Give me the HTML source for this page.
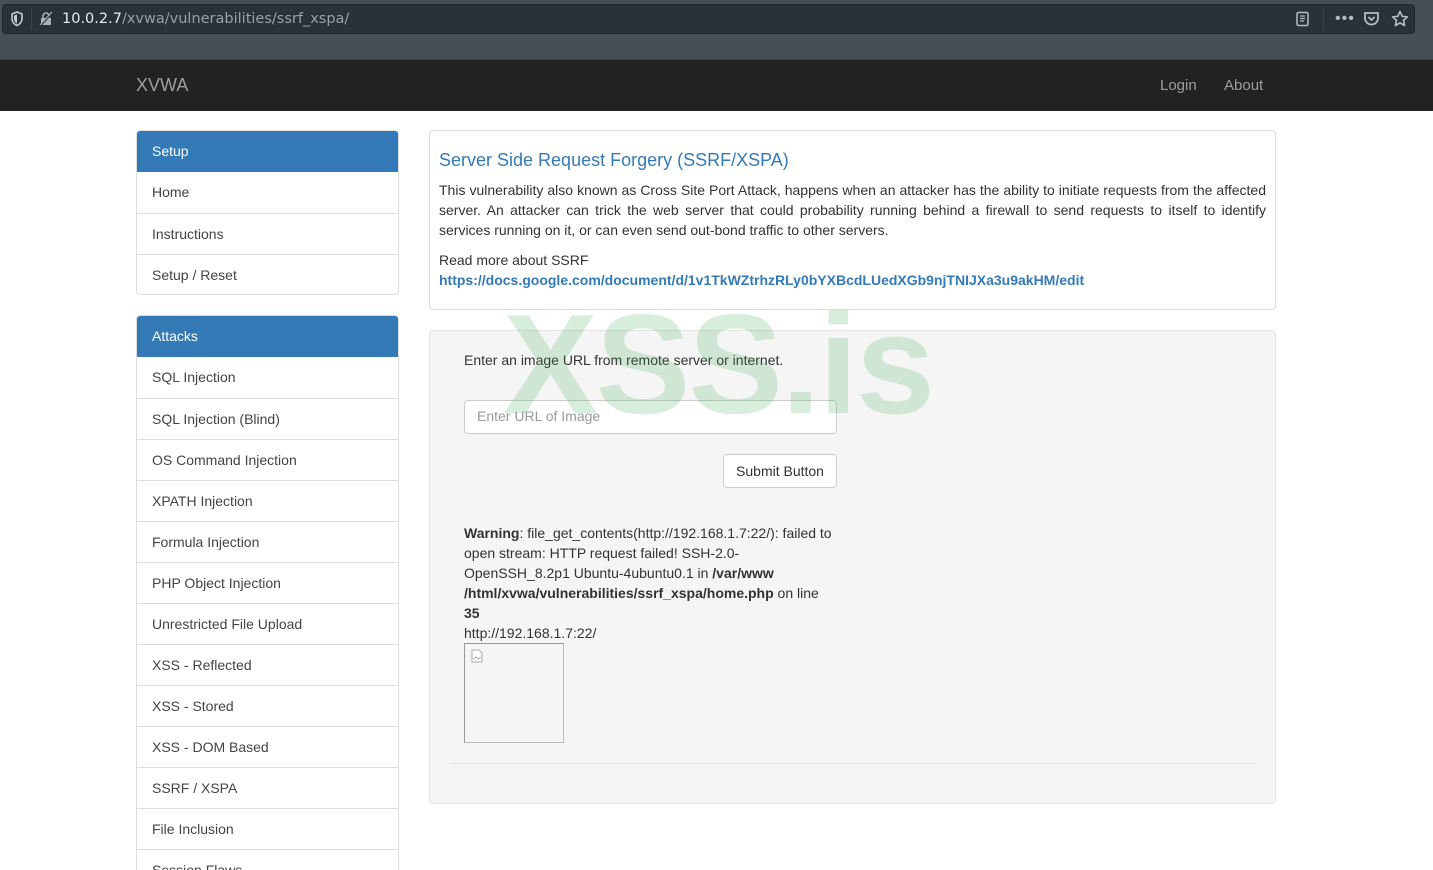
<!DOCTYPE html>
<html style="width:1433px;height:870px;overflow:hidden"><head><meta charset="utf-8"><style>
*{box-sizing:border-box;margin:0;padding:0}
body{width:1433px;height:870px;overflow:hidden;font-family:"Liberation Sans",sans-serif;font-size:14px;color:#333;background:#fff;position:relative}
.abs{position:absolute}
#chrome{left:0;top:0;width:1433px;height:59px;background:#474f56}
#url{left:2px;top:4px;width:1413px;height:30px;background:#2a3239;border-radius:4px;border:1px solid #1f262c}
#nav{left:0;top:59px;width:1433px;height:52px;background:#222;border-top:1px solid #3a3f44}
.navt{color:#9d9d9d;font-size:15px}
.side{left:136px;width:263px;border:1px solid #ddd;border-radius:4px;overflow:hidden;background:#fff}
.side div{position:absolute;left:0;width:261px;height:41px;line-height:40px;padding-left:15px;border-top:1px solid #ddd;font-size:14px;color:#444}
.side div.h{background:#337ab7;color:#fff;border-top:none;height:41px;line-height:41px;top:0}
#p1{left:429px;top:130px;width:847px;height:180px;border:1px solid #ddd;border-radius:4px;padding:0 9px}
#p2{left:429px;top:330px;width:847px;height:474px;border:1px solid #e3e3e3;border-radius:4px;background:#f5f5f5}
a{color:#337ab7;text-decoration:none}
</style></head><body>
<div id="chrome" class="abs"></div>
<div id="url" class="abs"></div>
<svg class="abs" style="left:10px;top:11px" width="14" height="16" viewBox="0 0 14 16"><path d="M7 1L2 3v4c0 4 2.5 6.5 5 7.5 2.5-1 5-3.5 5-7.5V3z" fill="none" stroke="#c8ccd0" stroke-width="1.6"/><path d="M7 3.5v9c-1.8-1-3-3-3-5.5V4.5z" fill="#c8ccd0"/></svg>
<div class="abs" style="left:31px;top:8px;width:1px;height:22px;background:#3c454d"></div>
<svg class="abs" style="left:38px;top:11px" width="16" height="16" viewBox="0 0 16 16"><rect x="3" y="7" width="10" height="7" fill="#aab0b6"/><path d="M5 7V5a3 3 0 016 0v2" fill="none" stroke="#aab0b6" stroke-width="1.6"/><path d="M2 15L14 2" stroke="#2a3239" stroke-width="2"/><path d="M2 14L14 1" stroke="#aab0b6" stroke-width="1.2"/></svg>
<div class="abs" style="left:62px;top:11px;font-family:'DejaVu Sans',sans-serif;font-size:14.5px;color:#e8eaed">10.0.2.7<span style="color:#9aa0a6">/xvwa/vulnerabilities/ssrf_xspa/</span></div>
<svg class="abs" style="left:1295px;top:11px" width="16" height="16" viewBox="0 0 16 16"><rect x="2" y="1.5" width="11" height="13" rx="1.5" fill="none" stroke="#b8bcc0" stroke-width="1.5"/><path d="M5 5h5M5 7.5h5M5 10h4" stroke="#b8bcc0" stroke-width="1.2"/></svg>
<div class="abs" style="left:1323px;top:8px;width:1px;height:22px;background:#3c454d"></div>
<div class="abs" style="left:1335px;top:10px;color:#b8bcc0;font-size:16px;letter-spacing:1px">•••</div>
<svg class="abs" style="left:1363px;top:11px" width="17" height="15" viewBox="0 0 17 15"><path d="M2 2h13v5a6.5 6.5 0 01-13 0z" fill="none" stroke="#b8bcc0" stroke-width="1.8"/><path d="M5.5 6l3 3 3-3" fill="none" stroke="#b8bcc0" stroke-width="1.8"/></svg>
<svg class="abs" style="left:1391px;top:10px" width="18" height="17" viewBox="0 0 18 17"><path d="M9 1.5l2.2 4.8 5.2.6-3.9 3.5 1.1 5.1L9 12.9 4.4 15.5l1.1-5.1L1.6 6.9l5.2-.6z" fill="none" stroke="#b8bcc0" stroke-width="1.6" stroke-linejoin="round"/></svg>
<div id="nav" class="abs"></div>
<div class="abs navt" style="left:136px;top:75px;font-size:18px">XVWA</div>
<div class="abs navt" style="left:1160px;top:77px">Login</div>
<div class="abs navt" style="left:1224px;top:77px">About</div>

<div class="abs side" style="top:130px;height:165px"><div class="h">Setup</div><div style="top:41px;border-top:none">Home</div><div style="top:82px">Instructions</div><div style="top:123px">Setup / Reset</div></div>
<div class="abs side" style="top:315px;height:580px"><div class="h">Attacks</div><div style="top:41px;border-top:none">SQL Injection</div><div style="top:82px">SQL Injection (Blind)</div><div style="top:123px">OS Command Injection</div><div style="top:164px">XPATH Injection</div><div style="top:205px">Formula Injection</div><div style="top:246px">PHP Object Injection</div><div style="top:287px">Unrestricted File Upload</div><div style="top:328px">XSS - Reflected</div><div style="top:369px">XSS - Stored</div><div style="top:410px">XSS - DOM Based</div><div style="top:451px">SSRF / XSPA</div><div style="top:492px">File Inclusion</div><div style="top:533px">Session Flaws</div></div>

<div id="p1" class="abs">
<div style="color:#337ab7;font-size:18px;margin-top:19px">Server Side Request Forgery (SSRF/XSPA)</div>
<div style="margin-top:9px;line-height:20px;text-align:justify">This vulnerability also known as Cross Site Port Attack, happens when an attacker has the ability to initiate requests from the affected server. An attacker can trick the web server that could probability running behind a firewall to send requests to itself to identify services running on it, or can even send out-bond traffic to other servers.</div>
<div style="margin-top:10px;line-height:20px">Read more about SSRF<br><a style="font-weight:bold">https://docs.google.com/document/d/1v1TkWZtrhzRLy0bYXBcdLUedXGb9njTNIJXa3u9akHM/edit</a></div>
</div>

<div id="p2" class="abs">
<div class="abs" style="left:34px;top:21px">Enter an image URL from remote server or internet.</div>
<div class="abs" style="left:34px;top:69px;width:373px;height:34px;background:#fff;border:1px solid #ccc;border-radius:4px;padding:7px 12px;color:#999">Enter URL of Image</div>
<div class="abs" style="left:293px;top:123px;width:114px;height:34px;background:#fff;border:1px solid #ccc;border-radius:4px;text-align:center;line-height:32px">Submit Button</div>
<div class="abs" style="left:34px;top:192px;width:380px;line-height:20px"><b>Warning</b>: file_get_contents(http://192.168.1.7:22/): failed to open stream: HTTP request failed! SSH-2.0-OpenSSH_8.2p1 Ubuntu-4ubuntu0.1 in <b>/var/www<br>/html/xvwa/vulnerabilities/ssrf_xspa/home.php</b> on line<br><b>35</b><br>http://192.168.1.7:22/</div>
<div class="abs" style="left:34px;top:312px;width:100px;height:100px;border:1px solid #999;border-right-color:#bbb;border-bottom-color:#bbb"><svg style="position:absolute;left:6px;top:5px" width="12" height="14" viewBox="0 0 12 14"><path d="M1 1h7l3 3v9H1z" fill="#fff" stroke="#aaa"/><path d="M2 10l3-2 2 2 3-2" fill="none" stroke="#aaa"/></svg></div>
<div class="abs" style="left:19px;top:432px;width:807px;height:1px;background:#e6e6e6"></div>
</div>

<div class="abs" style="left:503px;top:283px;font-size:142px;font-weight:bold;color:rgba(60,170,80,0.2);letter-spacing:-2px;pointer-events:none;white-space:nowrap">XSS.is</div>
</body></html>
